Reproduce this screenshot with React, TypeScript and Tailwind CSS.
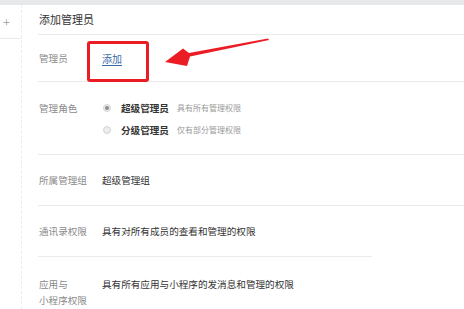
import React from "react";

const font = { fontFamily: '"Noto Sans CJK SC", "Noto Sans", sans-serif' };

function Radio({ checked }: { checked?: boolean }) {
  return (
    <span className="flex h-[8px] w-[8px] items-center justify-center rounded-full border border-[#d4d4d4] bg-[#ededed]">
      {checked && <span className="h-[4px] w-[4px] rounded-full bg-[#8c8c8c]" />}
    </span>
  );
}

export default function App() {
  return (
    <div
      className="relative h-[309px] w-[464px] overflow-hidden bg-white text-[#333]"
      style={font}
    >
      <div className="h-[5px] bg-[#e7e8ea]" />
      <div className="flex h-[304px]">
        <div className="w-[22px] border-r border-dashed border-[#ececec]">
          <div className="flex h-[34px] items-center justify-center border-b border-[#ebebeb] pr-[8px] text-[13px] font-light leading-none text-[#9a9a9a]">
            +
          </div>
        </div>
        <div className="flex-1 pl-[16px]">
          <div className="flex h-[30px] items-center border-b border-[#ebebeb] pl-[1px] text-[11px] text-[#333]">
            添加管理员
          </div>
          <div className="flex h-[47px] items-center border-b border-[#ebebeb] pl-[1px] text-[9.6px]">
            <div className="w-[63px] text-[#8a8a8a]">管理员</div>
            <a className="text-[10px] text-[#3b6aa6] underline underline-offset-2">添加</a>
          </div>
          <div className="flex h-[73px] border-b border-[#ebebeb] pl-[1px] pt-[19px] text-[9.6px]">
            <div className="w-[63px] leading-[14px] text-[#8a8a8a]">管理角色</div>
            <div className="flex flex-col gap-[8px]">
              <div className="flex h-[14px] items-center">
                <span className="ml-[1px] mr-[10px]"><Radio checked /></span>
                <span className="font-bold text-[#333]">超级管理员</span>
                <span className="ml-[8px] text-[8px] text-[#9a9a9a]">具有所有管理权限</span>
              </div>
              <div className="flex h-[14px] items-center">
                <span className="ml-[1px] mr-[10px]"><Radio /></span>
                <span className="font-bold text-[#333]">分级管理员</span>
                <span className="ml-[8px] text-[8px] text-[#9a9a9a]">仅有部分管理权限</span>
              </div>
            </div>
          </div>
          <div className="flex h-[51px] items-center border-b border-[#ebebeb] pl-[1px] text-[9.6px]">
            <div className="w-[63px] text-[#8a8a8a]">所属管理组</div>
            <div className="text-[#333]">超级管理组</div>
          </div>
          <div className="flex h-[51px] w-[334px] items-center border-b border-[#ebebeb] pl-[1px] text-[9.6px]">
            <div className="w-[63px] text-[#8a8a8a]">通讯录权限</div>
            <div className="text-[#333]">具有对所有成员的查看和管理的权限</div>
          </div>
          <div className="flex pl-[1px] pt-[19px] text-[9.6px] leading-[16px]">
            <div className="w-[63px] text-[#8a8a8a]">
              应用与
              <br />
              小程序权限
            </div>
            <div className="text-[#333]">具有所有应用与小程序的发消息和管理的权限</div>
          </div>
        </div>
      </div>

      <div className="absolute left-[87px] top-[41px] h-[41px] w-[62px] rounded-[3px] border-[3px] border-[#ec1c24]" />
      <svg className="absolute left-0 top-0" width="464" height="309" viewBox="0 0 464 309">
        <polygon
          points="268,38.5 269,40 190,56.5 187,66 165,62 183,48.5 189,53"
          fill="#ec1c24"
        />
      </svg>
    </div>
  );
}
